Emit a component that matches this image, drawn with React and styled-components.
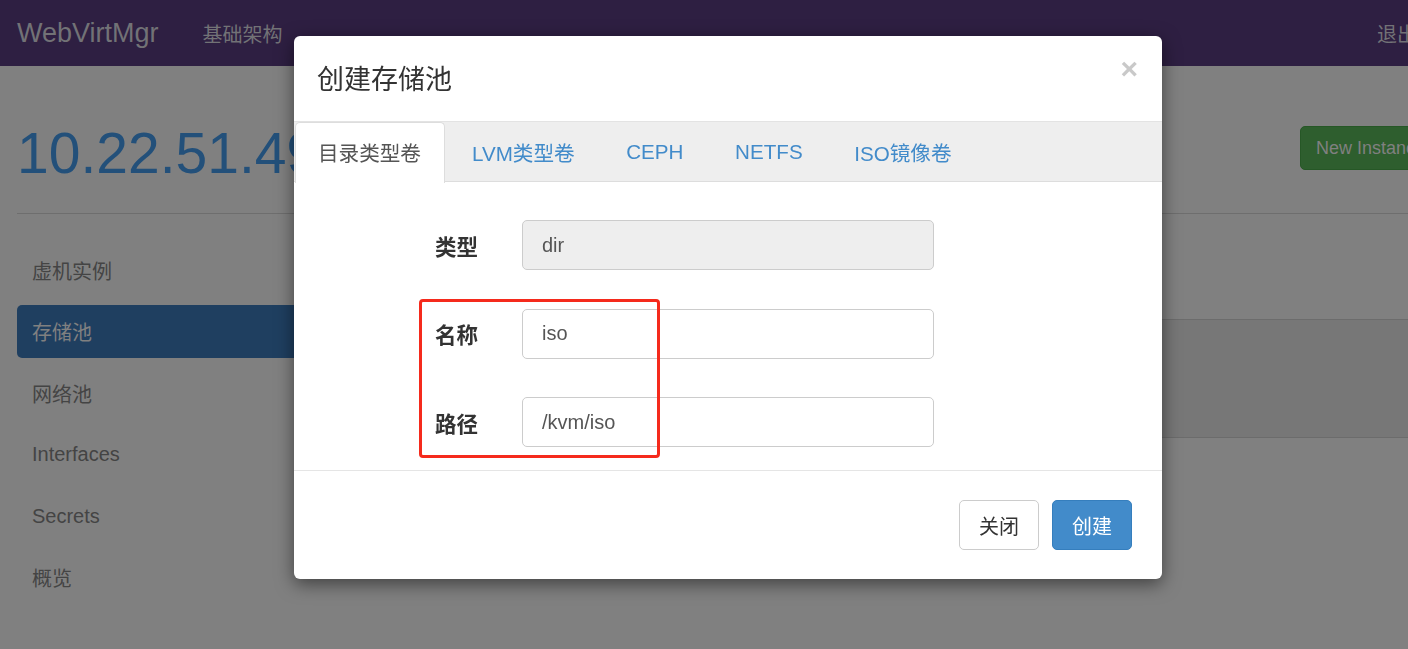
import React from 'react'
import styled, { createGlobalStyle } from 'styled-components'

// the page under the dialog is drawn with the colours it has behind the dark backdrop
const GlobalStyle = createGlobalStyle`
  html, body {
    margin: 0;
    padding: 0;
    overflow: hidden;
    background: #808080;
    font-family: "Liberation Sans", "Noto Sans CJK SC", Arial, sans-serif;
  }
  * { box-sizing: border-box; }
`

const Page = styled.div`
  width: 1458px;
  height: 649px;
  background: #808080;
`

const Navbar = styled.nav`
  height: 66px;
  background: #2e1f42;
  display: flex;
  align-items: center;
  padding: 0 17px;
`

const Brand = styled.span`
  font-size: 27px;
  color: #727276;
  margin-right: 44px;
`

const NavLink = styled.span`
  font-size: 20px;
  color: #727276;
  margin-left: ${p => (p.$right ? 'auto' : '0')};
  margin-right: ${p => (p.$right ? '24px' : '0')};
`

const Container = styled.div`
  padding: 0 17px;
`

const HeaderRow = styled.div`
  display: flex;
  align-items: flex-start;
  justify-content: space-between;
  padding-top: 56px;
  padding-bottom: 28px;
  border-bottom: 1px solid #6e6e6e;
`

const HostTitle = styled.h1`
  margin: 0;
  font-size: 57px;
  line-height: 1.1;
  font-weight: normal;
  color: #23507a;
`

const GreenButton = styled.button`
  margin-top: 4px;
  height: 44px;
  padding: 0 15px;
  border: 1px solid #265726;
  border-radius: 5px;
  background: #2e5e2e;
  color: #808080;
  font-size: 18px;
  font-family: inherit;
`

const Columns = styled.div`
  display: flex;
  gap: 20px;
`

const SideNav = styled.ul`
  width: 290px;
  margin: 30px 0 0;
  padding: 0;
  list-style: none;
  display: flex;
  flex-direction: column;
  gap: 8.5px;
`

const SideItem = styled.li`
  height: 53px;
  display: flex;
  align-items: center;
  padding: 0 15px;
  border-radius: 5px;
  font-size: 20px;
  color: ${p => (p.$active ? '#808080' : '#444444')};
  background: ${p => (p.$active ? '#1f3f60' : 'transparent')};
`

const Main = styled.div`
  flex: 1;
  padding-top: 105px;
`

const TableRow = styled.div`
  height: 119px;
  border-top: 1px solid #6c6c6c;
  border-bottom: 1px solid #6c6c6c;
  background: #777777;
`

const Modal = styled.div`
  position: fixed;
  top: 36px;
  left: 294px;
  width: 868px;
  background: #fff;
  border-radius: 6px;
  box-shadow: 0 5px 18px rgba(0, 0, 0, 0.5);
  color: #333;
`

const ModalHeader = styled.div`
  height: 85px;
  display: flex;
  align-items: center;
  justify-content: space-between;
  padding: 0 24px 0 23px;
`

const ModalTitle = styled.h4`
  margin: 0;
  margin-top: -3px;
  font-size: 27px;
  font-weight: normal;
  color: #333;
`

const Close = styled.span`
  align-self: flex-start;
  margin-top: 18px;
  font-size: 30px;
  font-weight: bold;
  line-height: 1;
  color: #c9c9c9;
`

const Tabs = styled.div`
  height: 61px;
  display: flex;
  background: #eeeeee;
  border-top: 1px solid #e3e3e3;
  border-bottom: 1px solid #dddddd;
  padding-left: 1px;
`

const Tab = styled.div`
  height: 61px;
  margin-bottom: -1px;
  display: flex;
  align-items: center;
  padding: ${p => (p.$active ? '0 23px 2px 22px' : '0 23.67px 2px 26px')};
  font-size: 20.6px;
  color: ${p => (p.$active ? '#555' : '#428bca')};
  background: ${p => (p.$active ? '#fff' : 'transparent')};
  border: 1px solid ${p => (p.$active ? '#ddd' : 'transparent')};
  border-bottom: none;
  border-radius: 5px 5px 0 0;
`

const Form = styled.div`
  position: relative;
  padding: 38px 0 23px 141px;
  display: grid;
  grid-template-columns: 87px 412px;
  row-gap: 38.5px;
  align-items: center;
`

const Label = styled.label`
  font-size: 21.5px;
  font-weight: bold;
  color: #333;
`

const Input = styled.div`
  height: 50px;
  display: flex;
  align-items: center;
  padding: 0 19px;
  border: 1px solid #cccccc;
  border-radius: 5px;
  font-size: 20px;
  color: #555;
  background: ${p => (p.$disabled ? '#eeeeee' : '#fff')};
`

// red annotation frame drawn over the name and path rows
const Highlight = styled.div`
  position: absolute;
  left: 125px;
  top: 117px;
  width: 241px;
  height: 159px;
  border: 3px solid #f52a1c;
  border-radius: 4px;
`

const ModalFooter = styled.div`
  display: flex;
  justify-content: flex-end;
  gap: 13px;
  padding: 29px 30px 29px;
  border-top: 1px solid #e5e5e5;
`

const Button = styled.button`
  width: 80px;
  height: 50px;
  border-radius: 5px;
  font-size: 20px;
  font-family: inherit;
  color: ${p => (p.$primary ? '#fff' : '#333')};
  background: ${p => (p.$primary ? '#428bca' : '#fff')};
  border: 1px solid ${p => (p.$primary ? '#357ebd' : '#cccccc')};
`

const sideItems = ['虚机实例', '存储池', '网络池', 'Interfaces', 'Secrets', '概览']
const tabs = ['目录类型卷', 'LVM类型卷', 'CEPH', 'NETFS', 'ISO镜像卷']
const fields = [
  { label: '类型', value: 'dir', disabled: true },
  { label: '名称', value: 'iso' },
  { label: '路径', value: '/kvm/iso' }
]

const App = () => (
  <>
    <GlobalStyle />
    <Page>
      <Navbar>
        <Brand>WebVirtMgr</Brand>
        <NavLink>基础架构</NavLink>
        <NavLink $right>退出</NavLink>
      </Navbar>
      <Container>
        <HeaderRow>
          <HostTitle>10.22.51.49</HostTitle>
          <GreenButton>New Instance</GreenButton>
        </HeaderRow>
        <Columns>
          <SideNav>
            {sideItems.map(item => (
              <SideItem key={item} $active={item === '存储池'}>{item}</SideItem>
            ))}
          </SideNav>
          <Main>
            <TableRow />
          </Main>
        </Columns>
      </Container>
    </Page>

    <Modal>
      <ModalHeader>
        <ModalTitle>创建存储池</ModalTitle>
        <Close>×</Close>
      </ModalHeader>
      <Tabs>
        {tabs.map((tab, i) => (
          <Tab key={tab} $active={i === 0}>{tab}</Tab>
        ))}
      </Tabs>
      <Form>
        {fields.map(f => (
          <React.Fragment key={f.label}>
            <Label>{f.label}</Label>
            <Input $disabled={f.disabled}>{f.value}</Input>
          </React.Fragment>
        ))}
        <Highlight />
      </Form>
      <ModalFooter>
        <Button>关闭</Button>
        <Button $primary>创建</Button>
      </ModalFooter>
    </Modal>
  </>
)

export default App
